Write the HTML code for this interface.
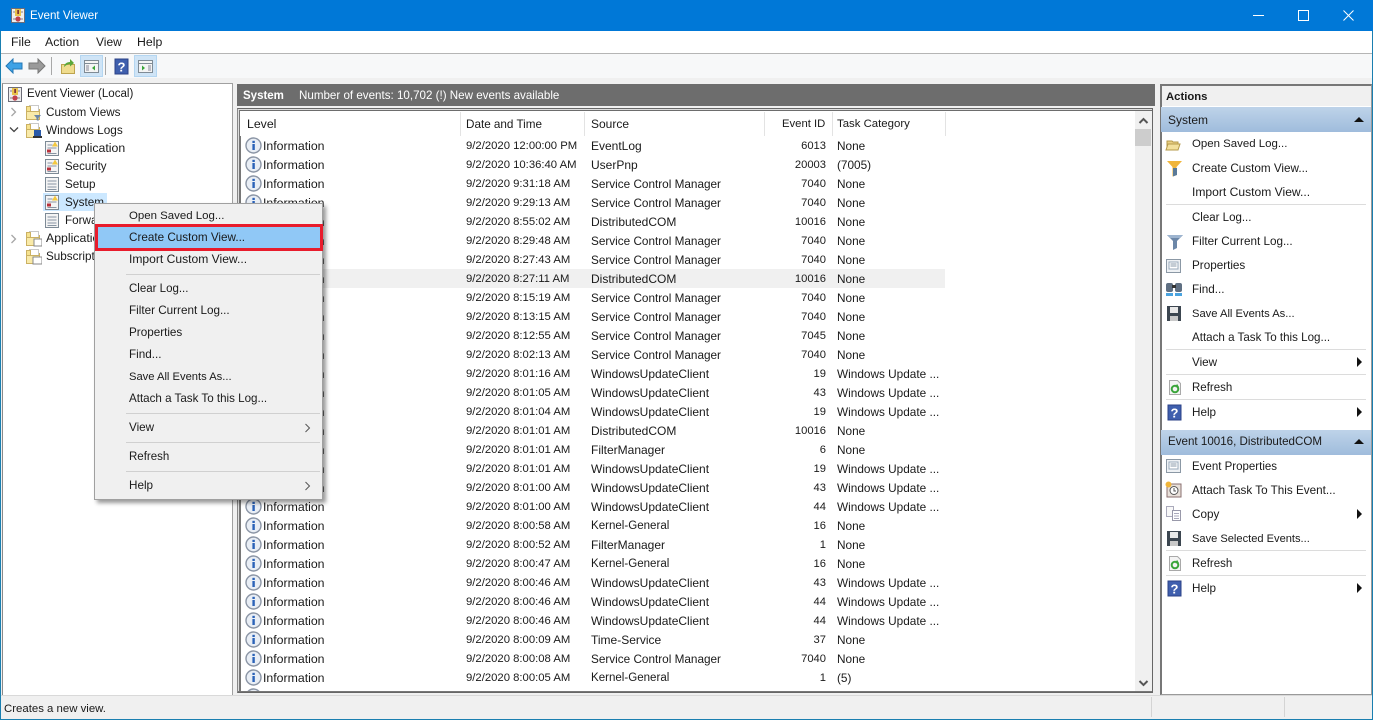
<!DOCTYPE html>
<html><head><meta charset="utf-8"><title>Event Viewer</title>
<style>
*{box-sizing:border-box}
html,body{margin:0;padding:0}
body{width:1373px;height:720px;position:relative;overflow:hidden;background:#f0f0f0;font-family:"Liberation Sans",sans-serif;font-size:11.7px;color:#1a1a1a}
.a{position:absolute}
.t{position:absolute;white-space:nowrap;line-height:16px}
.r{position:absolute;left:0;width:914px;height:19px;line-height:21px;white-space:nowrap}
.r span{position:absolute;top:0}
.r .l{left:25px;font-size:12.3px}.r .d{left:228px;font-size:11.3px}.r .s{left:353px;font-size:12px}.r .sc{font-size:11.76px}.r .k{font-size:11.55px}.r .e{right:326px;font-size:11.2px}.r .c{left:599px;font-size:11.8px}
.r svg{position:absolute;left:7px;top:1px}
.sep{position:absolute;height:1px;background:#dcdcdc}
.ar{position:absolute;left:1357px;width:0;height:0;border-left:5px solid #111;border-top:5px solid transparent;border-bottom:5px solid transparent}
.sec{position:absolute;left:1161px;width:210px;background:linear-gradient(#bed3e9,#9fbcdc)}
.up{position:absolute;left:1354px;width:0;height:0;border-bottom:5px solid #111;border-left:5px solid transparent;border-right:5px solid transparent}
.ic{position:absolute}
</style></head><body>
<svg width="0" height="0" style="position:absolute"><defs>
<g id="i"><circle cx="8.5" cy="8.5" r="7.5" fill="#e9eef5" stroke="#8b95a5" stroke-width="1.4"/><rect x="7.4" y="7" width="2.4" height="6" fill="#2b62b8"/><rect x="7.4" y="3.8" width="2.4" height="2.2" fill="#2b62b8"/></g>
<g id="log"><rect x="1.5" y="1.5" width="13" height="14" fill="#f4f4f4" stroke="#7d8a96"/><path d="M3.5 5h9M3.5 8h9M3.5 11h9M3.5 13.5h9" stroke="#8895a3"/></g>
<g id="logw"><rect x="1.5" y="1.5" width="13" height="14" fill="#f4f4f4" stroke="#7d8a96"/><path d="M3.5 5h5M3.5 8h9M3.5 13.5h9" stroke="#8895a3"/><path d="M11 1.5l3 5h-6z" fill="#f3c83e"/><rect x="3" y="9.5" width="4" height="3" fill="#b8323c"/></g>
<g id="fold"><path d="M1.5 3.500h5l1 2h7v9h-13z" fill="#f6e28e" stroke="#cbb163"/><rect x="4.500" y="1.500" width="9" height="6" fill="#fff" stroke="#c9c9c9"/><path d="M1.500 2.500h4v13h-4z" fill="#f6e28e" stroke="#cbb163"/><path d="M1.500 7.500h13v8h-13z" fill="#f9eaa9" stroke="#cbb163"/></g>
<g id="sprop"><rect x="1.5" y="2.5" width="14" height="13" fill="#eef1f4" stroke="#8b98a5"/><rect x="4" y="5" width="9" height="7" fill="#fff" stroke="#9ab"/><path d="M5.5 7h6M5.5 9h6" stroke="#89a"/></g>
<g id="save"><path d="M1 1h14v15H1z" fill="#3c4650"/><rect x="4" y="2" width="8" height="6" fill="#e8e8e8"/><rect x="4" y="11" width="8" height="5" fill="#c9c9c9"/></g>
<g id="ref"><path d="M2.500 1.500h8l3 3v11h-11z" fill="#f4f4f4" stroke="#a9a9a9"/><circle cx="8" cy="10" r="3.300" fill="none" stroke="#3aa53a" stroke-width="2"/><path d="M10 4.800l2 3.200-3.500.2z" fill="#3aa53a"/></g>
<g id="help"><rect x="1" y="1" width="13" height="15" fill="#3f5fae" stroke="#2b4287"/><text x="7.500" y="13.500" font-size="13" font-weight="bold" text-anchor="middle" fill="#fff" font-family="Liberation Sans">?</text></g>
<g id="filt"><path d="M1 2h16l-6 6v7l-4 2V8z" fill="#6c87a8"/><path d="M1 2h16l-3 3H4z" fill="#9db4cf"/></g>
</defs></svg>

<!-- Title bar -->
<div class="a" style="left:0;top:0;width:1373px;height:31px;background:#0078d7"></div>
<svg class="ic" style="left:10px;top:7px" width="16" height="17"><rect x="1.500" y="1.500" width="13" height="14" fill="#eee" stroke="#6d6d78"/><path d="M3 5h10M3 12h10" stroke="#8a7d8a"/><rect x="5" y="2" width="6" height="7" fill="#e9c44d"/><rect x="7.400" y="3" width="1.400" height="4" fill="#613"/><circle cx="8" cy="12" r="2.600" fill="#c0414b"/></svg>
<div class="t" style="left:30px;top:8px;color:#fff;font-size:11.6px">Event Viewer</div>
<div class="a" style="left:1253px;top:15px;width:11px;height:1px;background:#fff"></div>
<div class="a" style="left:1298px;top:10px;width:11px;height:11px;border:1px solid #fff"></div>
<svg class="ic" style="left:1343px;top:10px" width="11" height="11"><path d="M.5.500l10 10M10.500.500l-10 10" stroke="#fff" fill="none"/></svg>

<!-- Menu -->
<div class="a" style="left:0;top:31px;width:1373px;height:23px;background:#fff;border-bottom:1px solid #b5b5b5"></div>
<div class="t" style="left:11px;top:34px;font-size:12.3px">File</div>
<div class="t" style="left:45px;top:34px;font-size:12.3px">Action</div>
<div class="t" style="left:96px;top:34px;font-size:12px">View</div>
<div class="t" style="left:137px;top:34px;font-size:12.3px">Help</div>

<!-- Toolbar -->
<div class="a" style="left:0;top:54px;width:1373px;height:24px;background:#f7f8f9"></div>
<svg class="ic" style="left:5px;top:58px" width="18" height="16"><path d="M1 8l7-7v4h9v6H8v4z" fill="#3ea2e6" stroke="#2478b5"/></svg>
<svg class="ic" style="left:28px;top:58px" width="18" height="16"><path d="M17 8l-7-7v4H1v6h9v4z" fill="#9a9a9a" stroke="#777"/></svg>
<div class="a" style="left:51px;top:57px;width:1px;height:18px;background:#a8a8a8"></div>
<svg class="ic" style="left:60px;top:58px" width="16" height="17"><path d="M1.500 6.500h13v9h-13z" fill="#efdc8e" stroke="#bda44f"/><path d="M4 9c0-3 3-5 6-5V1l4 4-4 3.500V6c-2 0-4 1-6 3z" fill="#5aa83a"/></svg>
<div class="a" style="left:80px;top:55px;width:23px;height:22px;background:#cfe4f6;border:1px solid #b4d6f1"></div>
<svg class="ic" style="left:84px;top:60px" width="15" height="13"><rect x=".5" y=".5" width="14" height="12" fill="#f4f4f4" stroke="#7f8b95"/><path d="M.5 3.500h14" stroke="#7f8b95"/><path d="M2 6h3M2 8h3M2 10h3" stroke="#889"/><path d="M11 5.500v5l-3-2.500z" fill="#3aa53a"/></svg>
<div class="a" style="left:105px;top:57px;width:1px;height:18px;background:#a8a8a8"></div>
<svg class="ic" style="left:114px;top:58px" width="15" height="17"><use href="#help"/></svg>
<div class="a" style="left:134px;top:55px;width:23px;height:22px;background:#cfe4f6;border:1px solid #b4d6f1"></div>
<svg class="ic" style="left:138px;top:60px" width="15" height="13"><rect x=".5" y=".5" width="14" height="12" fill="#f4f4f4" stroke="#7f8b95"/><path d="M.5 3.500h14" stroke="#7f8b95"/><path d="M10 6h3M10 8h3M10 10h3" stroke="#889"/><path d="M4 5.500v5l3-2.500z" fill="#3aa53a"/></svg>

<!-- Tree pane -->
<div class="a" style="left:2px;top:83px;width:231px;height:613px;background:#fff;border:1px solid #a0a0a0;border-left-color:#8a8a8a"></div>
<svg class="ic" style="left:7px;top:86px" width="16" height="17"><rect x="1.500" y="1.500" width="13" height="14" fill="#eee" stroke="#6d6d78"/><path d="M3 5h10M3 12h10" stroke="#8a7d8a"/><rect x="5" y="2" width="6" height="7" fill="#e9c44d"/><rect x="7.400" y="3" width="1.400" height="4" fill="#613"/><circle cx="8" cy="12" r="2.600" fill="#c0414b"/></svg>
<div class="t" style="left:27px;top:86px;font-size:11.55px">Event Viewer (Local)</div>
<svg class="ic" style="left:10px;top:107px" width="8" height="10"><path d="M1.500 1l4 4-4 4" fill="none" stroke="#a6a6a6" stroke-width="1.300"/></svg>
<svg class="ic" style="left:25px;top:104px" width="17" height="17"><use href="#fold"/><path d="M9 11h7l-2.500 3v3l-2-1v-2z" fill="#6c87a8"/></svg>
<div class="t" style="left:46px;top:105px">Custom Views</div>
<svg class="ic" style="left:9px;top:126px" width="10" height="8"><path d="M1 1.500l4 4 4-4" fill="none" stroke="#444" stroke-width="1.300"/></svg>
<svg class="ic" style="left:25px;top:122px" width="17" height="17"><use href="#fold"/><rect x="9" y="8" width="7" height="6" fill="#2a5aa8"/><rect x="8" y="14" width="9" height="2" fill="#333"/></svg>
<div class="t" style="left:46px;top:122px;font-size:11.8px">Windows Logs</div>
<svg class="ic" style="left:44px;top:140px" width="16" height="17"><use href="#logw"/></svg>
<div class="t" style="left:65px;top:140px;font-size:12.3px">Application</div>
<svg class="ic" style="left:44px;top:158px" width="16" height="17"><use href="#logw"/></svg>
<div class="t" style="left:65px;top:159px;font-size:11.5px">Security</div>
<svg class="ic" style="left:44px;top:176px" width="16" height="17"><use href="#log"/></svg>
<div class="t" style="left:65px;top:177px">Setup</div>
<div class="a" style="left:43px;top:193px;width:64px;height:18px;background:#cce8ff"></div>
<svg class="ic" style="left:44px;top:194px" width="16" height="17"><use href="#logw"/></svg>
<div class="t" style="left:65px;top:195px">System</div>
<svg class="ic" style="left:44px;top:212px" width="16" height="17"><use href="#log"/></svg>
<div class="t" style="left:65px;top:213px">Forwarded Events</div>
<svg class="ic" style="left:10px;top:234px" width="8" height="10"><path d="M1.500 1l4 4-4 4" fill="none" stroke="#a6a6a6" stroke-width="1.300"/></svg>
<svg class="ic" style="left:25px;top:230px" width="17" height="17"><use href="#fold"/><rect x="9" y="9" width="8" height="7" fill="#fff" stroke="#888"/></svg>
<div class="t" style="left:46px;top:230px;font-size:12.3px">Applications and Services Logs</div>
<svg class="ic" style="left:25px;top:248px" width="17" height="17"><use href="#fold"/><rect x="8" y="9" width="9" height="7" fill="#fff" stroke="#888"/></svg>
<div class="t" style="left:46px;top:249px">Subscriptions</div>

<!-- Center pane -->
<div class="a" style="left:237px;top:84px;width:918px;height:22px;background:#6d6d6d"></div>
<div class="t" style="left:243px;top:88px;color:#fff;font-weight:bold;font-size:11.5px">System</div>
<div class="t" style="left:299px;top:88px;color:#fff;font-size:11.6px">Number of events: 10,702 (!) New events available</div>
<div class="a" style="left:237px;top:108px;width:916px;height:585px;background:#fff;border:1px solid #666;border-left:1px solid #888"></div>
<div class="a" style="left:238px;top:109px;width:914px;height:1px;background:#ddd"></div>
<div class="a" style="left:239px;top:110px;width:913px;height:1px;background:#6d6d6d"></div>
<div class="a" style="left:238px;top:109px;width:1px;height:583px;background:#ddd"></div>
<div class="a" style="left:239px;top:110px;width:1px;height:582px;background:#777"></div>
<div class="a" style="left:238px;top:691px;width:914px;height:1px;background:#777"></div>

<!-- Column header -->
<div class="t" style="left:247px;top:116px;font-size:12.3px">Level</div>
<div class="t" style="left:466px;top:117px">Date and Time</div>
<div class="t" style="left:591px;top:116px;font-size:12px">Source</div>
<div class="t" style="left:782px;top:116px;font-size:11.3px">Event ID</div>
<div class="t" style="left:837px;top:116px;font-size:11.4px">Task Category</div>
<div class="a" style="left:460px;top:112px;width:1px;height:24px;background:#e3e3e3"></div>
<div class="a" style="left:584px;top:112px;width:1px;height:24px;background:#e3e3e3"></div>
<div class="a" style="left:764px;top:112px;width:1px;height:24px;background:#e3e3e3"></div>
<div class="a" style="left:832px;top:112px;width:1px;height:24px;background:#e3e3e3"></div>
<div class="a" style="left:945px;top:112px;width:1px;height:24px;background:#e3e3e3"></div>

<!-- Rows -->
<div class="a" style="left:238px;top:136px;width:897px;height:555px;overflow:hidden">
<div class="a" style="left:2px;top:0;width:1px;height:555px;background:#777"></div>
<div class="a" style="left:0;top:0;width:914px;height:560px">
<div class="a" style="left:2px;top:133px;width:705px;height:19px;background:#f0f0f0"></div>
<div class="r" style="top:0"><svg width="17" height="17"><use href="#i"/></svg><span class="l">Information</span><span class="d">9/2/2020 12:00:00 PM</span><span class="s">EventLog</span><span class="e">6013</span><span class="c">None</span></div>
<div class="r" style="top:19px"><svg width="17" height="17"><use href="#i"/></svg><span class="l">Information</span><span class="d">9/2/2020 10:36:40 AM</span><span class="s">UserPnp</span><span class="e">20003</span><span class="c">(7005)</span></div>
<div class="r" style="top:38px"><svg width="17" height="17"><use href="#i"/></svg><span class="l">Information</span><span class="d">9/2/2020 9:31:18 AM</span><span class="s sc">Service Control Manager</span><span class="e">7040</span><span class="c">None</span></div>
<div class="r" style="top:57px"><svg width="17" height="17"><use href="#i"/></svg><span class="l">Information</span><span class="d">9/2/2020 9:29:13 AM</span><span class="s sc">Service Control Manager</span><span class="e">7040</span><span class="c">None</span></div>
<div class="r" style="top:76px"><svg width="17" height="17"><use href="#i"/></svg><span class="l">Information</span><span class="d">9/2/2020 8:55:02 AM</span><span class="s">DistributedCOM</span><span class="e">10016</span><span class="c">None</span></div>
<div class="r" style="top:95px"><svg width="17" height="17"><use href="#i"/></svg><span class="l">Information</span><span class="d">9/2/2020 8:29:48 AM</span><span class="s sc">Service Control Manager</span><span class="e">7040</span><span class="c">None</span></div>
<div class="r" style="top:114px"><svg width="17" height="17"><use href="#i"/></svg><span class="l">Information</span><span class="d">9/2/2020 8:27:43 AM</span><span class="s sc">Service Control Manager</span><span class="e">7040</span><span class="c">None</span></div>
<div class="r" style="top:133px"><svg width="17" height="17"><use href="#i"/></svg><span class="l">Information</span><span class="d">9/2/2020 8:27:11 AM</span><span class="s">DistributedCOM</span><span class="e">10016</span><span class="c">None</span></div>
<div class="r" style="top:152px"><svg width="17" height="17"><use href="#i"/></svg><span class="l">Information</span><span class="d">9/2/2020 8:15:19 AM</span><span class="s sc">Service Control Manager</span><span class="e">7040</span><span class="c">None</span></div>
<div class="r" style="top:171px"><svg width="17" height="17"><use href="#i"/></svg><span class="l">Information</span><span class="d">9/2/2020 8:13:15 AM</span><span class="s sc">Service Control Manager</span><span class="e">7040</span><span class="c">None</span></div>
<div class="r" style="top:190px"><svg width="17" height="17"><use href="#i"/></svg><span class="l">Information</span><span class="d">9/2/2020 8:12:55 AM</span><span class="s sc">Service Control Manager</span><span class="e">7045</span><span class="c">None</span></div>
<div class="r" style="top:209px"><svg width="17" height="17"><use href="#i"/></svg><span class="l">Information</span><span class="d">9/2/2020 8:02:13 AM</span><span class="s sc">Service Control Manager</span><span class="e">7040</span><span class="c">None</span></div>
<div class="r" style="top:228px"><svg width="17" height="17"><use href="#i"/></svg><span class="l">Information</span><span class="d">9/2/2020 8:01:16 AM</span><span class="s">WindowsUpdateClient</span><span class="e">19</span><span class="c">Windows Update ...</span></div>
<div class="r" style="top:247px"><svg width="17" height="17"><use href="#i"/></svg><span class="l">Information</span><span class="d">9/2/2020 8:01:05 AM</span><span class="s">WindowsUpdateClient</span><span class="e">43</span><span class="c">Windows Update ...</span></div>
<div class="r" style="top:266px"><svg width="17" height="17"><use href="#i"/></svg><span class="l">Information</span><span class="d">9/2/2020 8:01:04 AM</span><span class="s">WindowsUpdateClient</span><span class="e">19</span><span class="c">Windows Update ...</span></div>
<div class="r" style="top:285px"><svg width="17" height="17"><use href="#i"/></svg><span class="l">Information</span><span class="d">9/2/2020 8:01:01 AM</span><span class="s">DistributedCOM</span><span class="e">10016</span><span class="c">None</span></div>
<div class="r" style="top:304px"><svg width="17" height="17"><use href="#i"/></svg><span class="l">Information</span><span class="d">9/2/2020 8:01:01 AM</span><span class="s">FilterManager</span><span class="e">6</span><span class="c">None</span></div>
<div class="r" style="top:323px"><svg width="17" height="17"><use href="#i"/></svg><span class="l">Information</span><span class="d">9/2/2020 8:01:01 AM</span><span class="s">WindowsUpdateClient</span><span class="e">19</span><span class="c">Windows Update ...</span></div>
<div class="r" style="top:342px"><svg width="17" height="17"><use href="#i"/></svg><span class="l">Information</span><span class="d">9/2/2020 8:01:00 AM</span><span class="s">WindowsUpdateClient</span><span class="e">43</span><span class="c">Windows Update ...</span></div>
<div class="r" style="top:361px"><svg width="17" height="17"><use href="#i"/></svg><span class="l">Information</span><span class="d">9/2/2020 8:01:00 AM</span><span class="s">WindowsUpdateClient</span><span class="e">44</span><span class="c">Windows Update ...</span></div>
<div class="r" style="top:380px"><svg width="17" height="17"><use href="#i"/></svg><span class="l">Information</span><span class="d">9/2/2020 8:00:58 AM</span><span class="s k">Kernel-General</span><span class="e">16</span><span class="c">None</span></div>
<div class="r" style="top:399px"><svg width="17" height="17"><use href="#i"/></svg><span class="l">Information</span><span class="d">9/2/2020 8:00:52 AM</span><span class="s">FilterManager</span><span class="e">1</span><span class="c">None</span></div>
<div class="r" style="top:418px"><svg width="17" height="17"><use href="#i"/></svg><span class="l">Information</span><span class="d">9/2/2020 8:00:47 AM</span><span class="s k">Kernel-General</span><span class="e">16</span><span class="c">None</span></div>
<div class="r" style="top:437px"><svg width="17" height="17"><use href="#i"/></svg><span class="l">Information</span><span class="d">9/2/2020 8:00:46 AM</span><span class="s">WindowsUpdateClient</span><span class="e">43</span><span class="c">Windows Update ...</span></div>
<div class="r" style="top:456px"><svg width="17" height="17"><use href="#i"/></svg><span class="l">Information</span><span class="d">9/2/2020 8:00:46 AM</span><span class="s">WindowsUpdateClient</span><span class="e">44</span><span class="c">Windows Update ...</span></div>
<div class="r" style="top:475px"><svg width="17" height="17"><use href="#i"/></svg><span class="l">Information</span><span class="d">9/2/2020 8:00:46 AM</span><span class="s">WindowsUpdateClient</span><span class="e">44</span><span class="c">Windows Update ...</span></div>
<div class="r" style="top:494px"><svg width="17" height="17"><use href="#i"/></svg><span class="l">Information</span><span class="d">9/2/2020 8:00:09 AM</span><span class="s">Time-Service</span><span class="e">37</span><span class="c">None</span></div>
<div class="r" style="top:513px"><svg width="17" height="17"><use href="#i"/></svg><span class="l">Information</span><span class="d">9/2/2020 8:00:08 AM</span><span class="s sc">Service Control Manager</span><span class="e">7040</span><span class="c">None</span></div>
<div class="r" style="top:532px"><svg width="17" height="17"><use href="#i"/></svg><span class="l">Information</span><span class="d">9/2/2020 8:00:05 AM</span><span class="s k">Kernel-General</span><span class="e">1</span><span class="c">(5)</span></div>
<div class="r" style="top:551px"><svg width="17" height="17"><use href="#i"/></svg></div>
</div></div>

<!-- Scrollbar -->
<div class="a" style="left:1135px;top:111px;width:17px;height:580px;background:#f0f0f0"></div>
<svg class="ic" style="left:1138px;top:117px" width="11" height="8"><path d="M1.500 6l4-4 4 4" fill="none" stroke="#555" stroke-width="2"/></svg>
<div class="a" style="left:1135px;top:129px;width:16px;height:17px;background:#cdcdcd"></div>
<svg class="ic" style="left:1138px;top:679px" width="11" height="8"><path d="M1.500 2l4 4 4-4" fill="none" stroke="#555" stroke-width="2"/></svg>

<!-- Actions pane -->
<div class="a" style="left:1160px;top:84px;width:212px;height:611px;background:#fff;border:1px solid #9a9a9a;border-top:2px solid #777;border-left:2px solid #777"></div>
<div class="a" style="left:1162px;top:86px;width:209px;height:20px;background:#f0f0f0"></div>
<div class="t" style="left:1166px;top:89px;font-weight:bold;font-size:11.3px">Actions</div>
<div class="sec" style="top:107px;height:25px"></div>
<div class="t" style="left:1168px;top:112px;font-size:12px">System</div>
<div class="up" style="top:117px"></div>

<div class="t" style="left:1192px;top:136px;font-size:11.45px">Open Saved Log...</div>
<svg class="ic" style="left:1165px;top:137px" width="17" height="15"><path d="M2 4h5l1 1h5v8H2z" fill="#e9cf83" stroke="#b59a4a"/><path d="M1 13l2-6h12l-2 6z" fill="#f3e09c" stroke="#b59a4a"/></svg>
<div class="t" style="left:1192px;top:161px">Create Custom View...</div>
<svg class="ic" style="left:1166px;top:160px" width="18" height="17"><path d="M1 1h15l-5.500 6v8l-4 1.500V7z" fill="#f0b53a"/><path d="M7 8h4v7l-4 1.500z" fill="#5a7a99"/></svg>
<div class="t" style="left:1192px;top:184px;font-size:12.1px">Import Custom View...</div>
<div class="sep" style="left:1166px;top:204px;width:200px"></div>
<div class="t" style="left:1192px;top:210px;font-size:11.5px">Clear Log...</div>
<div class="t" style="left:1192px;top:234px">Filter Current Log...</div>
<svg class="ic" style="left:1166px;top:233px" width="18" height="18"><use href="#filt"/></svg>
<div class="t" style="left:1192px;top:258px">Properties</div>
<svg class="ic" style="left:1165px;top:257px" width="17" height="17"><use href="#sprop"/></svg>
<div class="t" style="left:1192px;top:282px">Find...</div>
<svg class="ic" style="left:1165px;top:281px" width="18" height="17"><rect x="1" y="2" width="7" height="9" rx="2" fill="#5f6f82"/><rect x="10" y="2" width="7" height="9" rx="2" fill="#5f6f82"/><rect x="7" y="4" width="4" height="3" fill="#333"/><rect x="1" y="12" width="7" height="3" fill="#4aa3df"/><rect x="10" y="12" width="7" height="3" fill="#4aa3df"/></svg>
<div class="t" style="left:1192px;top:306px;font-size:11.2px">Save All Events As...</div>
<svg class="ic" style="left:1166px;top:305px" width="16" height="17"><use href="#save"/></svg>
<div class="t" style="left:1192px;top:330px;font-size:11.6px">Attach a Task To this Log...</div>
<div class="sep" style="left:1166px;top:349px;width:200px"></div>
<div class="t" style="left:1192px;top:355px">View</div>
<div class="ar" style="top:357px"></div>
<div class="sep" style="left:1166px;top:374px;width:200px"></div>
<div class="t" style="left:1192px;top:380px;font-size:11.5px">Refresh</div>
<svg class="ic" style="left:1167px;top:379px" width="16" height="17"><use href="#ref"/></svg>
<div class="sep" style="left:1166px;top:399px;width:200px"></div>
<div class="t" style="left:1192px;top:405px">Help</div>
<svg class="ic" style="left:1167px;top:404px" width="15" height="17"><use href="#help"/></svg>
<div class="ar" style="top:407px"></div>

<div class="sec" style="top:430px;height:25px"></div>
<div class="t" style="left:1168px;top:434px;font-size:11.6px">Event 10016, DistributedCOM</div>
<div class="up" style="top:439px"></div>
<div class="t" style="left:1192px;top:459px;font-size:11.5px">Event Properties</div>
<svg class="ic" style="left:1165px;top:457px" width="17" height="17"><use href="#sprop"/></svg>
<div class="t" style="left:1192px;top:483px">Attach Task To This Event...</div>
<svg class="ic" style="left:1165px;top:481px" width="18" height="18"><rect x="2" y="3" width="14" height="13" fill="#e8e0da" stroke="#8a6f6f"/><circle cx="9" cy="9.500" r="4" fill="#fff" stroke="#555"/><path d="M9 7v3h2" stroke="#555" fill="none"/><circle cx="3.500" cy="3.500" r="3" fill="#f0b53a"/></svg>
<div class="t" style="left:1192px;top:507px">Copy</div>
<svg class="ic" style="left:1165px;top:505px" width="17" height="17"><path d="M1.500 1.500h7v10h-7z" fill="#f8f8f8" stroke="#aab"/><path d="M7.500 5.500h8v10h-8z" fill="#fff" stroke="#99a"/><path d="M9 8.500h5M9 11h5M9 13.500h5" stroke="#aab"/></svg>
<div class="ar" style="top:509px"></div>
<div class="t" style="left:1192px;top:531px;font-size:11.1px">Save Selected Events...</div>
<svg class="ic" style="left:1166px;top:530px" width="16" height="17"><use href="#save"/></svg>
<div class="sep" style="left:1166px;top:550px;width:200px"></div>
<div class="t" style="left:1192px;top:556px;font-size:11.5px">Refresh</div>
<svg class="ic" style="left:1167px;top:555px" width="16" height="17"><use href="#ref"/></svg>
<div class="sep" style="left:1166px;top:575px;width:200px"></div>
<div class="t" style="left:1192px;top:581px">Help</div>
<svg class="ic" style="left:1167px;top:580px" width="15" height="17"><use href="#help"/></svg>
<div class="ar" style="top:583px"></div>

<!-- Status bar -->
<div class="a" style="left:0;top:695px;width:1373px;height:23px;background:#f0f0f0;border-top:1px solid #d9d9d9"></div>
<div class="t" style="left:4px;top:701px;font-size:11.4px">Creates a new view.</div>
<div class="a" style="left:1151px;top:697px;width:1px;height:20px;background:#d4d4d4"></div>
<div class="a" style="left:1284px;top:697px;width:1px;height:20px;background:#d4d4d4"></div>
<div class="a" style="left:0;top:719px;width:1373px;height:1px;background:#1a7fb0"></div>
<div class="a" style="left:0;top:31px;width:1px;height:689px;background:#1a7fb0"></div>
<div class="a" style="left:1372px;top:31px;width:1px;height:689px;background:#1a7fb0"></div>

<!-- Context menu -->
<div class="a" style="left:94px;top:203px;width:229px;height:297px;background:#f0f0f0;border:1px solid #a0a0a0;box-shadow:3px 3px 4px rgba(0,0,0,.4)"></div>
<div class="a" style="left:98px;top:227px;width:222px;height:21px;background:#90c8f6;outline:3px solid #e81c2c;outline-offset:0"></div>
<div class="t" style="left:129px;top:208px;font-size:11.45px">Open Saved Log...</div>
<div class="t" style="left:129px;top:230px">Create Custom View...</div>
<div class="t" style="left:129px;top:251px;font-size:12.1px">Import Custom View...</div>
<div class="sep" style="left:126px;top:274px;width:194px;background:#d0d0d0"></div>
<div class="t" style="left:129px;top:281px;font-size:11.5px">Clear Log...</div>
<div class="t" style="left:129px;top:303px">Filter Current Log...</div>
<div class="t" style="left:129px;top:325px">Properties</div>
<div class="t" style="left:129px;top:347px">Find...</div>
<div class="t" style="left:129px;top:369px;font-size:11.2px">Save All Events As...</div>
<div class="t" style="left:129px;top:391px;font-size:11.6px">Attach a Task To this Log...</div>
<div class="sep" style="left:126px;top:413px;width:194px;background:#d0d0d0"></div>
<div class="t" style="left:129px;top:420px">View</div>
<svg class="ic" style="left:304px;top:423px" width="7" height="10"><path d="M1.500 1l4 4-4 4" fill="none" stroke="#555"/></svg>
<div class="sep" style="left:126px;top:442px;width:194px;background:#d0d0d0"></div>
<div class="t" style="left:129px;top:449px;font-size:11.5px">Refresh</div>
<div class="sep" style="left:126px;top:471px;width:194px;background:#d0d0d0"></div>
<div class="t" style="left:129px;top:478px">Help</div>
<svg class="ic" style="left:304px;top:481px" width="7" height="10"><path d="M1.500 1l4 4-4 4" fill="none" stroke="#555"/></svg>
</body></html>
